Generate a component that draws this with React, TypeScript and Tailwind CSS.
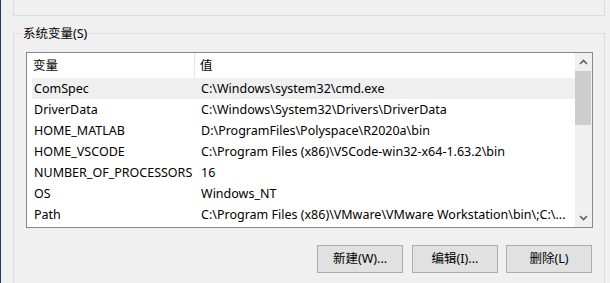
import React from 'react'

const rows: [string, string][] = [
  ['ComSpec', 'C:\\Windows\\system32\\cmd.exe'],
  ['DriverData', 'C:\\Windows\\System32\\Drivers\\DriverData'],
  ['HOME_MATLAB', 'D:\\ProgramFiles\\Polyspace\\R2020a\\bin'],
  ['HOME_VSCODE', 'C:\\Program Files (x86)\\VSCode-win32-x64-1.63.2\\bin'],
  ['NUMBER_OF_PROCESSORS', '16'],
  ['OS', 'Windows_NT'],
  ['Path', 'C:\\Program Files (x86)\\VMware\\VMware Workstation\\bin\\;C:\\...'],
]

const font = { fontFamily: '"Segoe UI", "Noto Sans", "Noto Sans CJK SC", sans-serif' }

function Button({ label }: { label: string }) {
  return (
    <button className="w-[86px] h-[28px] pt-[1px] bg-[#e1e1e1] border border-[#adadad] text-[12.5px] text-black flex items-center justify-center">
      {label}
    </button>
  )
}

export default function App() {
  return (
    <div className="w-[610px] h-[283px] bg-[#f0f0f0] border-l border-[#1c3a6e] overflow-hidden text-black" style={font}>
      {/* previous group box, cut off above */}
      <div className="ml-[12px] w-[592px] h-[16px] border-x border-b border-[#dcdcdc]" />

      {/* 系统变量 group */}
      <div className="relative ml-[12px] mt-[17px] w-[592px] h-[260px] border-x border-t border-[#dcdcdc]">
        <span className="absolute left-[7px] top-[-8px] px-[2px] bg-[#f0f0f0] text-[12.5px] leading-[16px]">
          系统变量(S)
        </span>

        <div className="ml-[12px] mt-[18px] w-[567px] h-[176px] border border-[#828790] bg-white flex">
          <div className="flex-1 flex flex-col min-w-0">
            {/* header */}
            <div className="h-[25px] flex text-[12.5px] shrink-0">
              <div className="w-[168px] pl-[6px] pt-[1px] flex items-center border-r border-[#e5e5e5]">变量</div>
              <div className="pl-[5px] pt-[1px] flex items-center">值</div>
            </div>
            {rows.map(([k, v], i) => (
              <div
                key={k}
                className={`ml-[5px] h-[21px] pt-[2px] flex items-center text-[12.5px] shrink-0 ${i === 0 ? 'bg-[#efefef]' : ''}`}
              >
                <div className="w-[169px] pl-[2px] whitespace-nowrap overflow-hidden">{k}</div>
                <div className="flex-1 min-w-0 whitespace-nowrap overflow-hidden">{v}</div>
              </div>
            ))}
          </div>

          {/* scrollbar */}
          <div className="w-[17px] bg-[#f0f0f0] flex flex-col shrink-0">
            <div className="h-[18px] flex items-center justify-center">
              <svg width="9" height="6" viewBox="0 0 9 6">
                <path d="M1 5 L4.5 1.5 L8 5" fill="none" stroke="#606060" strokeWidth="1.6" />
              </svg>
            </div>
            <div className="w-[16px] h-[54px] bg-[#cdcdcd]" />
            <div className="flex-1" />
            <div className="h-[18px] flex items-center justify-center">
              <svg width="9" height="6" viewBox="0 0 9 6">
                <path d="M1 1 L4.5 4.5 L8 1" fill="none" stroke="#606060" strokeWidth="1.6" />
              </svg>
            </div>
          </div>
        </div>

        <div className="mt-[17px] mr-[12px] flex justify-end gap-[8px]">
          <div className="mr-[1px]">
            <Button label="新建(W)..." />
          </div>
          <Button label="编辑(I)..." />
          <Button label="删除(L)" />
        </div>
      </div>
    </div>
  )
}
